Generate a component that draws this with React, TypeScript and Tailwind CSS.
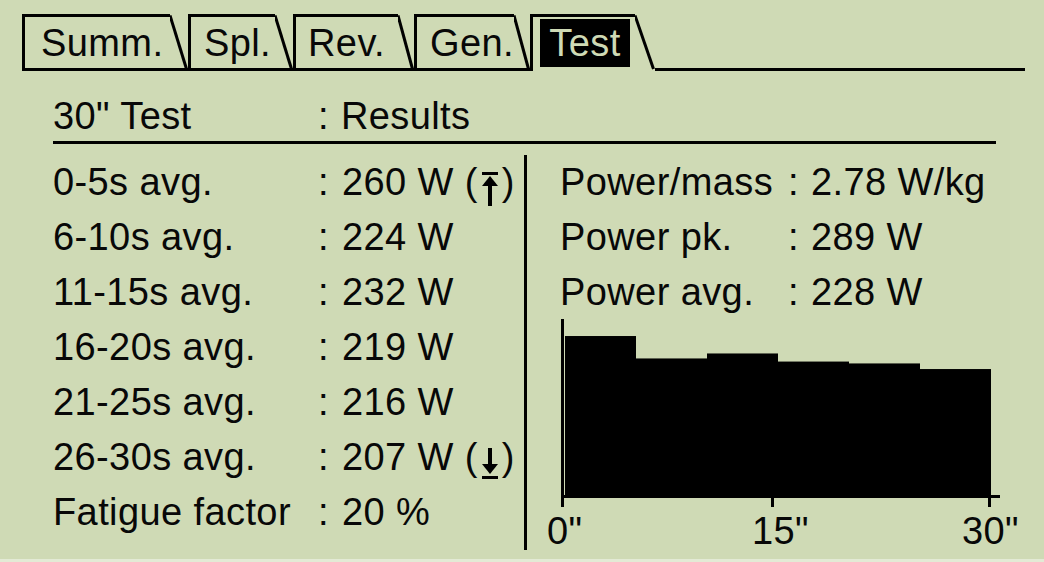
import React from "react";

type Tab = { label: string; box: string; slant: number };

const tabs: Tab[] = [
  { label: "Summ.", box: "w-[148px] pl-[16px]", slant: 18 },
  { label: "Spl.", box: "w-[87px] pl-[13px]", slant: 18 },
  { label: "Rev.", box: "w-[105px] pl-[12px]", slant: 16 },
  { label: "Gen.", box: "w-[100px] pl-[13px]", slant: 16 },
];

const leftRows: { label: string; value: string; icon?: "up" | "down" }[] = [
  { label: "0-5s avg.", value: "260 W", icon: "up" },
  { label: "6-10s avg.", value: "224 W" },
  { label: "11-15s avg.", value: "232 W" },
  { label: "16-20s avg.", value: "219 W" },
  { label: "21-25s avg.", value: "216 W" },
  { label: "26-30s avg.", value: "207 W", icon: "down" },
  { label: "Fatigue factor", value: "20 %" },
];

const rightRows = [
  { label: "Power/mass", value: "2.78 W/kg" },
  { label: "Power pk.", value: "289 W" },
  { label: "Power avg.", value: "228 W" },
];

const bars = [260, 224, 232, 219, 216, 207];

function Slant({ w, bottom }: { w: number; bottom: boolean }) {
  return (
    <svg width={w} height={57} viewBox={`0 0 ${w} 57`} className="block shrink-0">
      <line x1={0} y1={1.5} x2={w - 1.5} y2={55} stroke="#000" strokeWidth={3} />
      {bottom && <line x1={0} y1={55.5} x2={w} y2={55.5} stroke="#000" strokeWidth={3} />}
    </svg>
  );
}

function UpIcon() {
  return (
    <svg width={22} height={35} viewBox="0 0 22 35" className="inline-block align-[-11px] mx-[1px]">
      <rect x={3} y={1} width={16} height={3} fill="#000" />
      <polygon points="11,5 3,15 19,15" fill="#000" />
      <rect x={9} y={12} width={4} height={23} fill="#000" />
    </svg>
  );
}

function DownIcon() {
  return (
    <svg width={22} height={32} viewBox="0 0 22 32" className="inline-block align-[-10px] mx-[1px]">
      <rect x={9} y={0} width={4} height={18} fill="#000" />
      <polygon points="3,16 19,16 11,26" fill="#000" />
      <rect x={3} y={28} width={16} height={3} fill="#000" />
    </svg>
  );
}

function Chart() {
  const bottom = 179;
  const scale = 0.623;
  return (
    <div className="relative h-[231px] -mt-[1px]">
      <svg width={440} height={188} viewBox="0 0 440 188" className="block">
        {bars.map((v, i) => {
          const h = v * scale;
          return <rect key={i} x={5 + i * 71} y={bottom - h} width={71} height={h} fill="#000" />;
        })}
        <rect x={1} y={0} width={3} height={188} fill="#000" />
        <rect x={1} y={176} width={439} height={3} fill="#000" />
        <rect x={211} y={176} width={3} height={12} fill="#000" />
        <rect x={428} y={176} width={3} height={12} fill="#000" />
      </svg>
      <span className="absolute left-[-13px] top-[193px] leading-[38px]">0"</span>
      <span className="absolute left-[192px] top-[193px] leading-[38px]">15"</span>
      <span className="absolute left-[402px] top-[193px] leading-[38px]">30"</span>
    </div>
  );
}

export default function App() {
  return (
    <div className="w-[1044px] h-[562px] overflow-hidden bg-[#cfdab5] border-b-[3px] border-[#e3ead5] pt-[14px] text-[38px] tracking-[0.4px] text-[#080808] font-['Liberation_Sans',Arial,sans-serif]">
      {/* tab bar */}
      <div className="flex pl-[22px]">
        {tabs.map((t) => (
          <div key={t.label} className="flex">
            <div
              className={`flex h-[57px] items-center border-l-[3px] border-t-[3px] border-b-[3px] border-black leading-[38px] ${t.box}`}
            >
              {t.label}
            </div>
            <Slant w={t.slant} bottom />
          </div>
        ))}
        <div className="flex">
          <div className="h-[57px] w-[105px] border-l-[3px] border-t-[3px] border-black pl-[7px] pt-[2px]">
            <div className="flex h-[48px] w-[90px] items-center justify-center bg-black leading-[38px] text-[#cfdab5]">
              Test
            </div>
          </div>
          <Slant w={20} bottom={false} />
        </div>
        <div className="h-[57px] flex-1 border-b-[3px] border-black mr-[19px]" />
      </div>

      {/* content */}
      <div className="pl-[53px]">
        <div className="mt-[26px] flex w-[943px] border-b-[3px] border-black pb-[6px] leading-[38px]">
          <span className="w-[265px]">30" Test</span>
          <span>:</span>
          <span className="ml-[12px]">Results</span>
        </div>

        <div className="mt-[11px] flex">
          <div className="w-[474px] border-r-[3px] border-black">
            {leftRows.map((r) => (
              <div key={r.label} className="flex h-[55px] leading-[55px] whitespace-nowrap">
                <span className="w-[265px]">{r.label}</span>
                <span>:</span>
                <span className="ml-[13px]">
                  {r.value}
                  {r.icon && (
                    <>
                      {" ("}
                      {r.icon === "up" ? <UpIcon /> : <DownIcon />}
                      {")"}
                    </>
                  )}
                </span>
              </div>
            ))}
          </div>
          <div className="pl-[33px] flex-1">
            {rightRows.map((r) => (
              <div key={r.label} className="flex h-[55px] leading-[55px] whitespace-nowrap">
                <span className="w-[228px]">{r.label}</span>
                <span>:</span>
                <span className="ml-[12px]">{r.value}</span>
              </div>
            ))}
            <Chart />
          </div>
        </div>
      </div>
    </div>
  );
}
